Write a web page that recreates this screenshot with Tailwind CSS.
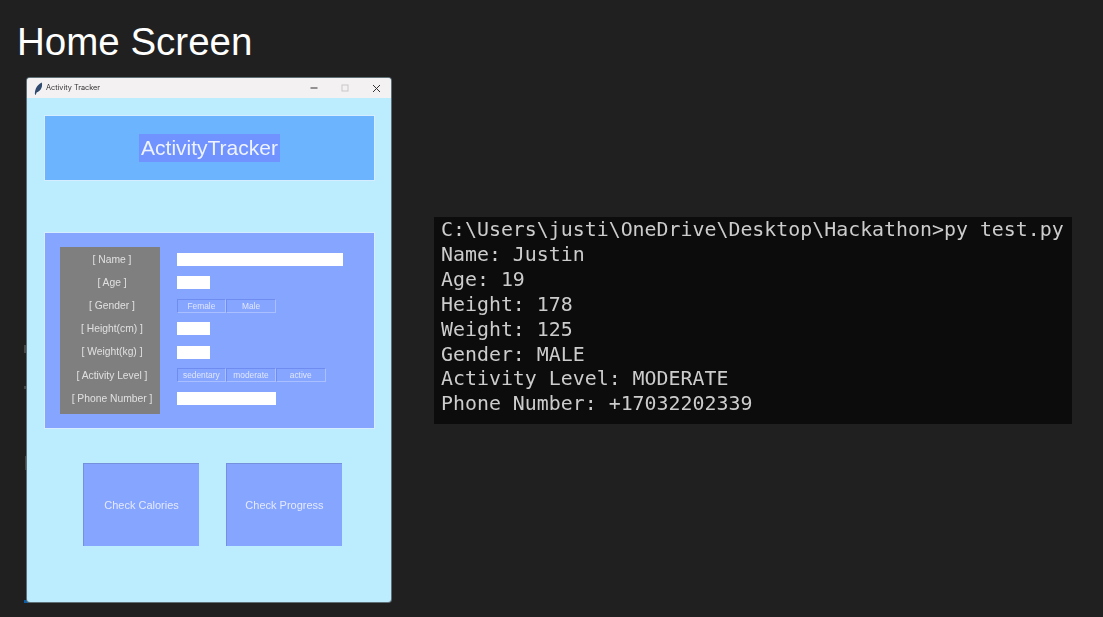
<!DOCTYPE html>
<html>
<head>
<meta charset="utf-8">
<title>Home Screen</title>
<script src="https://cdn.jsdelivr.net/npm/@tailwindcss/browser@4"></script>
</head>
<body class="bg-[#202020]">
<div class="w-[1103px] h-[617px] overflow-hidden relative font-['Liberation_Sans',Arial,sans-serif]">
    <h1 class="pl-[17px] pt-[20px] h-[78px] text-[38.5px] leading-[44px] text-white">Home Screen</h1>

    <!-- marks left over from the slide behind the window -->
    <div class="absolute left-[24px] top-[345px] w-[2px] h-[8px] bg-[#5a5a5a]/70"></div>
    <div class="absolute left-[24px] top-[386px] w-[2px] h-[3px] bg-[#5a5a5a]/70"></div>
    <div class="absolute left-[25px] top-[456px] w-[1px] h-[14px] bg-[#5a5a5a]/70"></div>
    <div class="absolute left-[24px] top-[600px] w-[4px] h-[3px] bg-[#0a5ea8]"></div>

    <div class="flex pl-[27px]">
        <!-- tkinter window -->
        <div class="w-[364px] h-[524px] rounded-[3px] overflow-hidden bg-[#bbedff] shadow-[0_0_0_1px_#5f6f76] blur-[0.6px] shrink-0">
            <div class="h-[20px] bg-[#f4f1f2] flex items-center pl-[7px] text-[#333]">
                <svg class="w-[9px] h-[13px]" viewBox="0 0 9 13"><path d="M1 12.8 C0.6 9 1.6 3.6 7.8 0.4 C8.8 4 7.2 9 2.6 10.4 L1.8 12.8 Z" fill="#2f4a6e"/></svg>
                <span class="ml-[3px] text-[7.3px] leading-none font-['Inter',sans-serif]">Activity Tracker</span>
                <div class="ml-auto flex items-center h-full">
                    <svg class="w-[8px] h-[8px] mr-[23px]" viewBox="0 0 8 8"><path d="M0.5 4H7.5" stroke="#333" stroke-width="1"/></svg>
                    <svg class="w-[8px] h-[8px] mr-[23px]" viewBox="0 0 8 8"><rect x="1" y="1" width="6" height="6" fill="none" stroke="#c9c7c8" stroke-width="1"/></svg>
                    <svg class="w-[9px] h-[9px] mr-[10px]" viewBox="0 0 9 9"><path d="M1 1L8 8M8 1L1 8" stroke="#333" stroke-width="1"/></svg>
                </div>
            </div>

            <div class="px-[17px] pt-[17px]">
                <div class="h-[66px] w-[331px] bg-[#6db4ff] border border-[#d6ecff] flex items-center justify-center">
                    <span class="bg-[#7193ff] text-[#eef3ff] text-[21px] leading-[28px] px-[2px]">ActivityTracker</span>
                </div>

                <div class="mt-[51px] h-[197px] w-[331px] bg-[#86a5ff] border border-[#d6ecff] flex pl-[15px] pt-[14px]">
                    <div class="w-[100px] h-[167px] bg-[#7f7f7f] grid grid-rows-7 text-[#e0e0e0] text-[10.3px] text-center items-center pt-[1px] pb-[4px] pl-[4px]">
                        <div>[ Name ]</div>
                        <div>[ Age ]</div>
                        <div>[ Gender ]</div>
                        <div>[ Height(cm) ]</div>
                        <div>[ Weight(kg) ]</div>
                        <div>[ Activity Level ]</div>
                        <div>[ Phone Number ]</div>
                    </div>
                    <div class="ml-[17px] h-[167px] grid grid-rows-7 items-center pt-[1px] pb-[4px]">
                        <div class="w-[166px] h-[13px] bg-white"></div>
                        <div class="w-[33px] h-[13px] bg-white"></div>
                        <div class="flex -ml-[0.5px] text-[8.4px] text-[#dfe6ff] text-center leading-[12px]">
                            <div class="w-[49.7px] h-[14px] border border-[#6f8cf0] border-r-[#a9bfff] border-b-[#a9bfff]">Female</div>
                            <div class="w-[49.7px] h-[14px] border border-[#6f8cf0] border-r-[#a9bfff] border-b-[#a9bfff]">Male</div>
                        </div>
                        <div class="w-[33px] h-[13px] bg-white"></div>
                        <div class="w-[33px] h-[13px] bg-white"></div>
                        <div class="flex -ml-[0.5px] text-[8.4px] text-[#dfe6ff] text-center leading-[12px]">
                            <div class="w-[49.7px] h-[14px] border border-[#6f8cf0] border-r-[#a9bfff] border-b-[#a9bfff]">sedentary</div>
                            <div class="w-[49.7px] h-[14px] border border-[#6f8cf0] border-r-[#a9bfff] border-b-[#a9bfff]">moderate</div>
                            <div class="w-[49.7px] h-[14px] border border-[#6f8cf0] border-r-[#a9bfff] border-b-[#a9bfff]">active</div>
                        </div>
                        <div class="w-[99px] h-[13px] bg-white"></div>
                    </div>
                </div>

                <div class="mt-[34px] pl-[39px] flex gap-[27px] text-[11px] text-[#e3e9ff]">
                    <div class="w-[116px] h-[83px] bg-[#86a5ff] border-l border-t border-[#7590dc] flex items-center justify-center">Check Calories</div>
                    <div class="w-[116px] h-[83px] bg-[#86a5ff] border-l border-t border-[#7590dc] flex items-center justify-center">Check Progress</div>
                </div>
            </div>
        </div>

        <!-- terminal output -->
        <div class="ml-[43px] mt-[139px] w-[638px] h-[207px] bg-[#0c0c0c] pl-[7px] pt-[1px] text-[#cccccc] font-['DejaVu_Sans_Mono',monospace] text-[19.9px] leading-[24.9px] whitespace-nowrap blur-[0.3px]">
            <div>C:\Users\justi\OneDrive\Desktop\Hackathon&gt;py test.py</div>
            <div>Name: Justin</div>
            <div>Age: 19</div>
            <div>Height: 178</div>
            <div>Weight: 125</div>
            <div>Gender: MALE</div>
            <div>Activity Level: MODERATE</div>
            <div>Phone Number: +17032202339</div>
        </div>
    </div>
</div>
</body>
</html>
